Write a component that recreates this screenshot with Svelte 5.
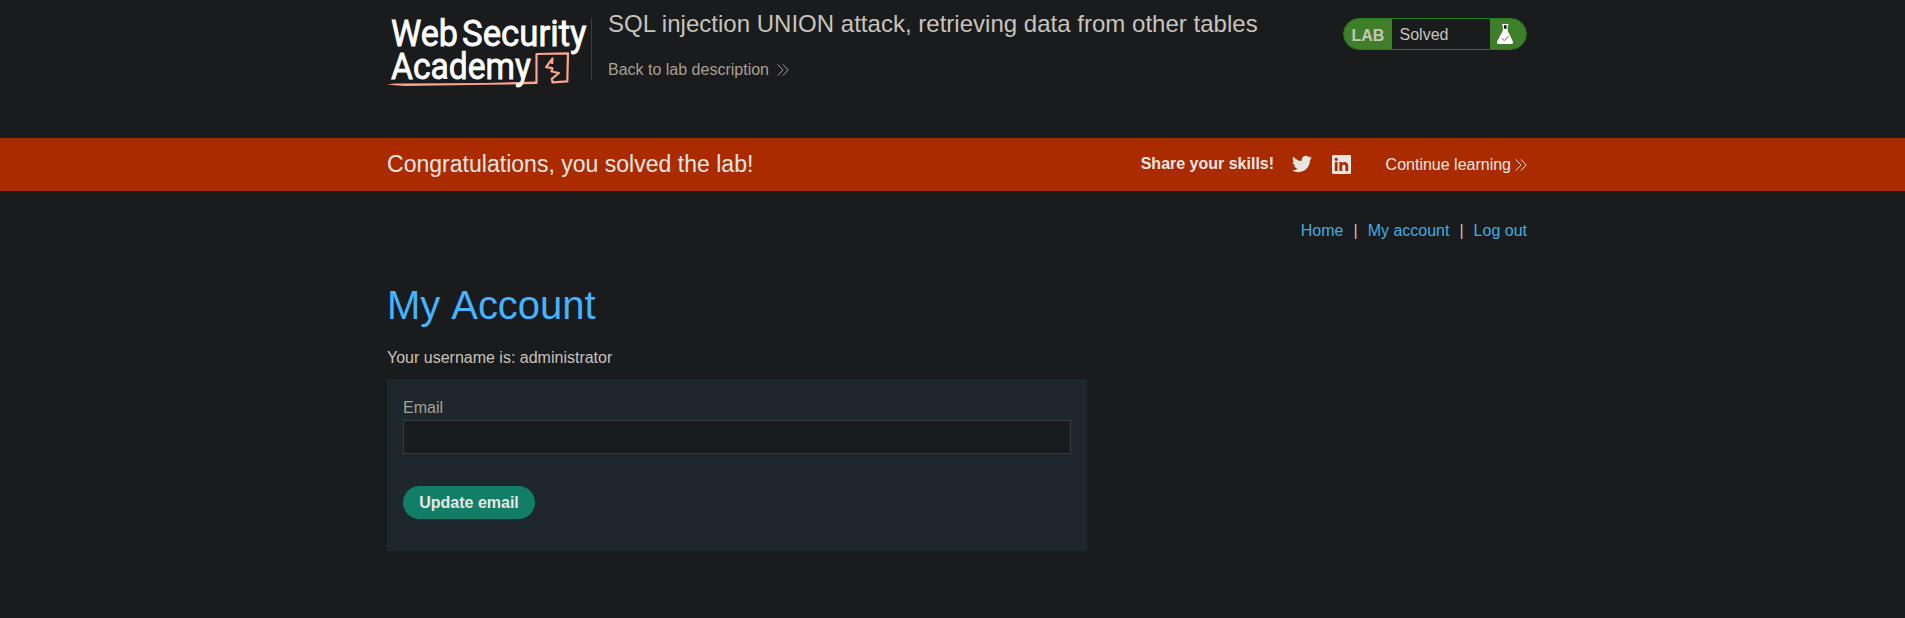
<script>
  const navLinks = ['Home', 'My account', 'Log out'];
  let email = $state('');
</script>

{#snippet chevrons()}
  <svg class="chevrons" viewBox="0 0 12 12" width="12" height="12" aria-hidden="true">
    <path d="M.7.4 6 6 .7 11.6M5.9.4 11.2 6 5.9 11.6" fill="none" stroke="currentColor" stroke-width="1" />
  </svg>
{/snippet}

<div class="page">
  <header class="container lab-header">
    <svg class="logo" viewBox="0 0 204 78" width="204" height="78" role="img" aria-label="Web Security Academy">
      <g class="logo-text">
        <text x="4" y="36.400" textLength="67" lengthAdjust="spacingAndGlyphs">Web</text>
        <text x="75" y="36.400" textLength="124.500" lengthAdjust="spacingAndGlyphs">Security</text>
      </g>
      <path d="M8 73.400 100 73 149.800 71.400 150 74 100 74.800 18 76 8 75.200 0 74.500z" fill="#ffa28e" />
      <path d="M149.500 73.500 149.500 44 181 43.300 180.300 71.400 165.500 72.300 164.800 68.800 172 63 164.500 61.500 165.500 58.200 159 57.200 165.500 48.500 165 54" fill="none" stroke="#ffa28e" stroke-width="2.200" stroke-linejoin="round" />
      <g class="logo-text">
        <text x="4" y="69" textLength="140" lengthAdjust="spacingAndGlyphs">Academy</text>
      </g>
    </svg>
    <div class="title">
      <h2>SQL injection UNION attack, retrieving data from other tables</h2>
      <a class="back" href="#lab">Back to lab description {@render chevrons()}</a>
    </div>
    <div class="status">
      <span class="lab">LAB</span>
      <span class="solved">Solved</span>
      <span class="flask">
        <svg viewBox="0 0 16 20" width="16" height="20" aria-hidden="true">
          <path d="M5 0h6.500v1.300h-.8v5.500L16 17.700q.4 2.300-1.600 2.300H1.600Q-.4 20 0 17.700L5.800 6.800V1.300H5z" fill="#fff" />
          <path d="M7 1.300h2.600v3.500H7z" fill="#12200d" />
          <path d="m4.700 14 2.500 2.600 4.400-4.400" fill="none" stroke="#666" stroke-width="1" />
        </svg>
      </span>
    </div>
  </header>

  <section class="banner">
    <div class="container banner-row">
      <h4>Congratulations, you solved the lab!</h4>
      <strong>Share your skills!</strong>
      <svg class="twitter" viewBox="0 0 24 24" width="20" height="20" aria-label="Twitter">
        <path fill="#e8e6e3" d="M23.95 4.57a10 10 0 0 1-2.82.77 4.96 4.96 0 0 0 2.16-2.72 9.9 9.9 0 0 1-3.12 1.19 4.92 4.92 0 0 0-8.39 4.48A13.93 13.93 0 0 1 1.64 3.16a4.92 4.92 0 0 0 1.52 6.57 4.9 4.9 0 0 1-2.23-.61v.06a4.92 4.92 0 0 0 3.95 4.83 5 5 0 0 1-2.21.08 4.94 4.94 0 0 0 4.6 3.42A9.87 9.87 0 0 1 0 19.54a13.99 13.99 0 0 0 7.55 2.21c9.05 0 14-7.5 14-13.98 0-.21 0-.42-.02-.63a9.94 9.94 0 0 0 2.46-2.55z" />
      </svg>
      <svg class="linkedin" viewBox="0 0 19 19" width="19" height="19" aria-label="LinkedIn">
        <path fill="#e8e6e3" fill-rule="evenodd" d="M1.2 0h16.6Q19 0 19 1.2v16.6q0 1.200-1.200 1.200H1.200Q0 19 0 17.800V1.200Q0 0 1.200 0zM2.800 7.100v9h2.800v-9zM4.200 2.700a1.650 1.650 0 1 0 0 3.300 1.650 1.650 0 0 0 0-3.300zM7.400 7.100v9h2.800v-4.500c0-2.700 3.200-2.700 3.200 0v4.500h2.800v-5.200c0-4.400-4.600-4.900-6.100-2.600V7.100z" />
      </svg>
      <a class="continue" href="#learn">Continue learning {@render chevrons()}</a>
    </div>
  </section>

  <main class="container">
    <nav>
      {#each navLinks as label, i}
        {#if i > 0}<span>|</span>{/if}
        <a href="#{label}">{label}</a>
      {/each}
    </nav>
    <h1>My Account</h1>
    <p>Your username is: administrator</p>
    <form onsubmit={(e) => e.preventDefault()}>
      <label for="email">Email</label>
      <input id="email" type="email" bind:value={email} />
      <button type="submit">Update email</button>
    </form>
  </main>
</div>

<style>
  :global(body) { background: #191b1c; }
  * { box-sizing: border-box; }
  .page {
    display: flex;
    flex-direction: column;
    height: 618px;
    overflow: hidden;
    background: #191b1c;
    color: #c8c3bc;
    font: 16px/18px "Liberation Sans", Arial, sans-serif;
  }
  a { text-decoration: none; }
  h1, h2, h4, p { margin: 0; font-weight: 400; }
  .container { width: 1140px; margin-left: 387px; }
  .lab-header { display: flex; height: 138px; }
  .logo { flex: none; margin-top: 10px; overflow: visible; }
  .logo-text { fill: #fff; stroke: #fff; stroke-width: .8; font: 400 36px Roboto, sans-serif; }
  .title {
    height: 62px;
    margin-top: 18px;
    padding-left: 16px;
    border-left: 1px solid #3c4043;
  }
  h2 { margin-top: -8px; font-size: 24px; line-height: 28px; letter-spacing: .015px; white-space: nowrap; }
  .back { display: flex; align-items: center; gap: 8.500px; margin-top: 23px; color: #a8a095; }
  .chevrons { flex: none; }
  .status {
    display: flex;
    width: 184px;
    height: 32px;
    margin: 18px 0 0 auto;
    overflow: hidden;
    border: 1px solid #267d1e;
    border-radius: 16px;
    line-height: 31px;
  }
  .lab { width: 48px; padding-left: 7.500px; background: #3f7f29; color: #c8c3bc; font-weight: 700; line-height: 33px; }
  .solved { flex: 1; padding-left: 7.500px; }
  .flask { display: flex; width: 36px; padding: 5px 0 0 6.500px; background: #3f7f29; }
  .banner { height: 53px; background: #ab2b00; border-top: 3px solid #a12a03; color: #e8e6e3; }
  .banner-row { display: flex; align-items: center; height: 47px; }
  h4 { flex: 1; margin-top: -2px; font-size: 23px; line-height: 28px; letter-spacing: .02px; }
  strong { margin: -1px 18px 0 0; }
  .twitter { margin-top: -1px; }
  .linkedin { margin: 0 34.500px 0 20px; }
  .continue { display: flex; align-items: center; gap: 4px; color: #e8e6e3; }
  nav { display: flex; justify-content: flex-end; gap: 10px; margin-top: 31px; }
  nav a { color: #41aee0; }
  h1 { margin-top: 41px; color: #46b3ff; font-size: 40px; line-height: 48px; letter-spacing: -.05px; font-kerning: none; }
  p { margin-top: 20px; }
  form { width: 700px; height: 172px; margin-top: 12px; padding: 20px 16px; background: #1d272c; }
  label { display: block; color: #a8a095; }
  input {
    display: block;
    width: 668px;
    height: 34px;
    margin-top: 3px;
    padding: 0 8px;
    border: 1px solid #373c3e;
    border-radius: 0;
    outline: 0;
    background: #191b1c;
    color: #c8c3bc;
    font: inherit;
  }
  button {
    width: 132px;
    height: 33px;
    margin-top: 32px;
    padding: 0;
    border: 0;
    border-radius: 17px;
    background: #127e67;
    color: #e8e6e3;
    font: 700 16px "Liberation Sans", Arial, sans-serif;
  }
</style>
